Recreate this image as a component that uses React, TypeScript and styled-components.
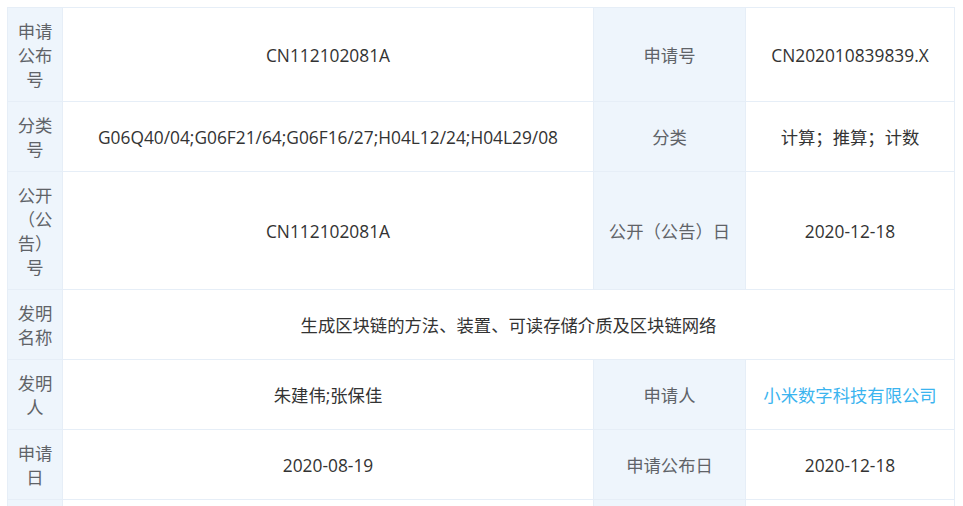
import styled, { createGlobalStyle } from "styled-components";

const GlobalStyle = createGlobalStyle`
  html, body {
    margin: 0;
    padding: 0;
    background: #ffffff;
    overflow: hidden;
  }
  body {
    font-family: "Open Sans", "Noto Sans CJK SC", sans-serif;
  }
`;

const Wrapper = styled.div`
  padding: 7px 9px 0 7px;
`;

const Table = styled.table`
  width: 947px;
  border-collapse: collapse;
  table-layout: fixed;
  font-size: 13pt;
  line-height: 24px;
`;

const Col = styled.col<{ $w: number }>`
  width: ${(p) => p.$w}px;
`;

const LabelCell = styled.td`
  background-color: #eef5fc;
  color: #5f6368;
  border: 1px solid #e6eef7;
  text-align: center;
  vertical-align: middle;
  padding: 11px 3px 10px;
  word-break: break-all;
`;

const ValueCell = styled.td<{ $link?: boolean }>`
  background-color: #ffffff;
  color: ${(p) => (p.$link ? "#3bb4ef" : "#333333")};
  border: 1px solid #e6eef7;
  text-align: center;
  vertical-align: middle;
  padding: 11px 6px 10px;
  white-space: nowrap;
`;

interface IRow {
  label: string;
  value: string;
  label2?: string;
  value2?: string;
  link?: boolean;
}

const rows: IRow[] = [
  { label: "申请公布号", value: "CN112102081A", label2: "申请号", value2: "CN202010839839.X" },
  {
    label: "分类号",
    value: "G06Q40/04;G06F21/64;G06F16/27;H04L12/24;H04L29/08",
    label2: "分类",
    value2: "计算；推算；计数",
  },
  { label: "公开（公告）号", value: "CN112102081A", label2: "公开（公告）日", value2: "2020-12-18" },
  { label: "发明名称", value: "生成区块链的方法、装置、可读存储介质及区块链网络" },
  { label: "发明人", value: "朱建伟;张保佳", label2: "申请人", value2: "小米数字科技有限公司", link: true },
  { label: "申请日", value: "2020-08-19", label2: "申请公布日", value2: "2020-12-18" },
  { label: "申请人地址", value: "北京市海淀区", label2: "代理机构", value2: "北京" },
];

export default function App() {
  return (
    <>
      <GlobalStyle />
      <Wrapper>
        <Table>
          <colgroup>
            <Col $w={55} />
            <Col $w={531} />
            <Col $w={152} />
            <Col $w={209} />
          </colgroup>
          <tbody>
            {rows.map((row) => (
              <tr key={row.label}>
                <LabelCell>{row.label}</LabelCell>
                {row.label2 ? (
                  <>
                    <ValueCell>{row.value}</ValueCell>
                    <LabelCell>{row.label2}</LabelCell>
                    <ValueCell $link={row.link}>{row.value2}</ValueCell>
                  </>
                ) : (
                  <ValueCell colSpan={3}>{row.value}</ValueCell>
                )}
              </tr>
            ))}
          </tbody>
        </Table>
      </Wrapper>
    </>
  );
}
